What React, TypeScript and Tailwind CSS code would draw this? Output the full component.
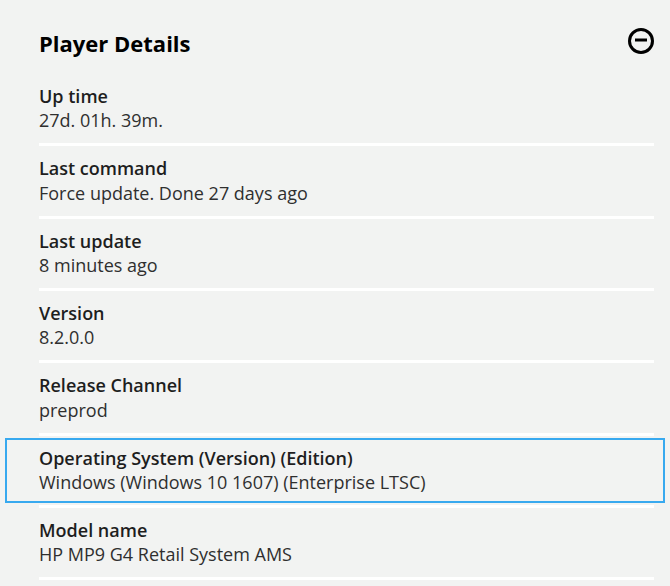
import React from "react";

const rows: { label: string; value: string; focused?: boolean }[] = [
  { label: "Up time", value: "27d. 01h. 39m." },
  { label: "Last command", value: "Force update. Done 27 days ago" },
  { label: "Last update", value: "8 minutes ago" },
  { label: "Version", value: "8.2.0.0" },
  { label: "Release Channel", value: "preprod" },
  { label: "Operating System (Version) (Edition)", value: "Windows (Windows 10 1607) (Enterprise LTSC)", focused: true },
  { label: "Model name", value: "HP MP9 G4 Retail System AMS" },
];

function RowText({ label, value }: { label: string; value: string }) {
  return (
    <>
      <div className="text-[18px] leading-[24.17px] font-semibold text-[#1e1e1e]">{label}</div>
      <div className="text-[18px] leading-[24.17px] font-normal text-[#2f2f2f]">{value}</div>
    </>
  );
}

export default function App() {
  return (
    <div
      className="min-h-[586px] w-full bg-[#f2f3f2] pl-[39px] pr-[16px] pt-[28px] overflow-hidden"
      style={{ fontFamily: '"Open Sans", "Noto Sans", sans-serif' }}
    >
      <div className="flex items-start justify-between mb-[16px]">
        <h2 className="text-[22px] leading-[30px] font-bold text-black">Player Details</h2>
        <svg width="28" height="28" viewBox="0 0 28 28" className="-mt-[1px] -mr-[1px]">
          <circle cx="14" cy="14" r="11.5" fill="none" stroke="#000" strokeWidth="3" />
          <line x1="8" y1="13" x2="20" y2="13" stroke="#000" strokeWidth="3" />
        </svg>
      </div>
      <div className="flex flex-col">
        {rows.map((r) =>
          r.focused ? (
            <div key={r.label} className="border-b-[3px] border-white py-[2px]">
              <div className="-ml-[34px] -mr-[11px] pl-[32px] pr-[9px] border-2 border-[#38a9ef] pt-[6px] pb-[7px]">
                <RowText label={r.label} value={r.value} />
              </div>
            </div>
          ) : (
            <div key={r.label} className="border-b-[3px] border-white pt-[10px] pb-[11px]">
              <RowText label={r.label} value={r.value} />
            </div>
          )
        )}
      </div>
    </div>
  );
}
